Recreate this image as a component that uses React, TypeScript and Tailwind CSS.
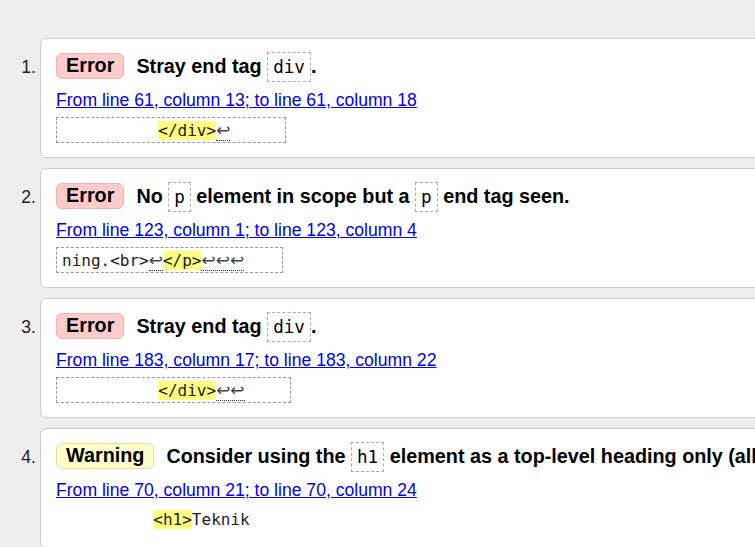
import type { ReactNode } from "react";

type Message = {
  kind: "Error" | "Warning";
  title: ReactNode;
  location: string;
  extract: ReactNode;
  boxed: boolean;
  boxWidth?: string;
};

const Code = ({ children }: { children: ReactNode }) => (
  <code className="inline-block h-[30px] border border-dashed border-[#aaa] px-[5px] align-middle font-['DejaVu_Sans_Mono',monospace] text-[17.6px] font-normal leading-[28px]">
    {children}
  </code>
);

const Hl = ({ children }: { children: ReactNode }) => <span className="bg-[#ffff80]">{children}</span>;

const Lf = ({ count = 1 }: { count?: number }) => (
  <span className="border-b border-dotted border-[#333] font-['DejaVu_Sans',sans-serif] text-[17px] text-[#444]">
    {"\u21a9".repeat(count)}
  </span>
);

const messages: Message[] = [
  {
    kind: "Error",
    title: (
      <>
        Stray end tag <Code>div</Code>.
      </>
    ),
    location: "From line 61, column 13; to line 61, column 18",
    extract: (
      <>
        {"          "}
        <Hl>{"</div>"}</Hl>
        <Lf />
      </>
    ),
    boxed: true,
    boxWidth: "w-[230px]",
  },
  {
    kind: "Error",
    title: (
      <>
        No <Code>p</Code> element in scope but a <Code>p</Code> end tag seen.
      </>
    ),
    location: "From line 123, column 1; to line 123, column 4",
    extract: (
      <>
        {"ning.<br>"}
        <Lf />
        <Hl>{"</p>"}</Hl>
        <Lf count={3} />
      </>
    ),
    boxed: true,
    boxWidth: "w-[227px]",
  },
  {
    kind: "Error",
    title: (
      <>
        Stray end tag <Code>div</Code>.
      </>
    ),
    location: "From line 183, column 17; to line 183, column 22",
    extract: (
      <>
        {"          "}
        <Hl>{"</div>"}</Hl>
        <Lf count={2} />
      </>
    ),
    boxed: true,
    boxWidth: "w-[235px]",
  },
  {
    kind: "Warning",
    title: (
      <>
        Consider using the <Code>h1</Code> element as a top-level heading only (all <Code>h1</Code> elements are
        treated as top-level headings by many screen readers and other tools).
      </>
    ),
    location: "From line 70, column 21; to line 70, column 24",
    extract: (
      <>
        {"          "}
        <Hl>{"<h1>"}</Hl>
        Teknik
      </>
    ),
    boxed: false,
  },
];

export default function App() {
  return (
    <div className="min-h-screen w-[755px] overflow-hidden bg-[#eeeeee] pt-[38px] font-['Liberation_Sans',Arial,sans-serif] text-black">
      <ol className="flex flex-col gap-[10px]">
        {messages.map((m, i) => (
          <li key={i} className="flex">
            <div className="w-[40px] shrink-0 pr-[4px] pt-[17px] text-right text-[17.6px] leading-[24px] text-[#222]">
              {i + 1}.
            </div>
            <div className="h-[120px] w-[780px] shrink-0 rounded-[6px] border border-[#cccccc] bg-white pl-[15px] pt-[11px]">
              <div className="flex h-[32px] items-center whitespace-nowrap text-[19.8px] font-bold">
                <span
                  className={
                    m.kind === "Error"
                      ? "mr-[12px] flex h-[26px] items-center rounded-[6px] border border-[#e8b4b4] bg-[#ffcccc] px-[9px]"
                      : "mr-[12px] flex h-[26px] items-center rounded-[6px] border border-[#e0e0a8] bg-[#ffffcc] px-[9px]"
                  }
                >
                  {m.kind}
                </span>
                <span className="leading-[32px]">{m.title}</span>
              </div>
              <a
                href="#"
                className="mt-[8px] block h-[20px] text-[17.6px] leading-[20px] text-[#0000ee] underline"
              >
                {m.location}
              </a>
              <div
                className={
                  m.boxed
                    ? `mt-[7px] flex h-[26px] items-center border border-dashed border-[#999] px-[5px] ${m.boxWidth}`
                    : "mt-[7px] flex h-[26px] items-center pl-[1px]"
                }
              >
                <pre className="font-['DejaVu_Sans_Mono',monospace] text-[16px] leading-[20px] text-[#222]">
                  {m.extract}
                </pre>
              </div>
            </div>
          </li>
        ))}
      </ol>
    </div>
  );
}
